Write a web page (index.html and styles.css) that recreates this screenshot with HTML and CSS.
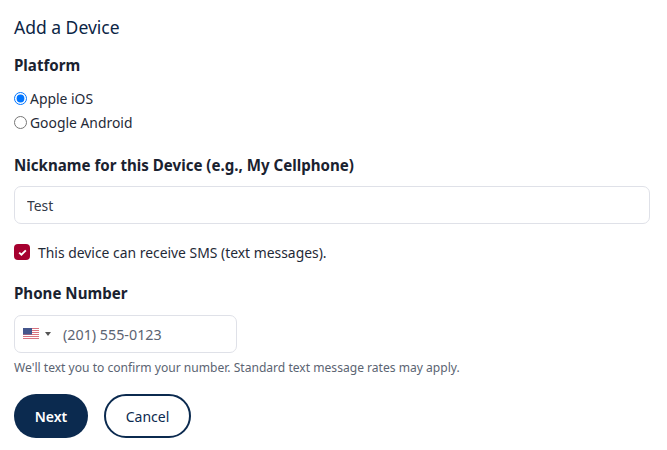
FILE: index.html
```html
<!DOCTYPE html>
<html lang="en">
<head>
    <meta charset="UTF-8">
    <title>Add a Device</title>
    <link rel="stylesheet" href="styles.css">
</head>
<body>
    <form class="device-form">
        <h1 class="title">Add a Device</h1>

        <div class="group-label platform-label">Platform</div>
        <label class="radio-row"><input type="radio" name="platform" checked> Apple iOS</label>
        <label class="radio-row"><input type="radio" name="platform"> Google Android</label>

        <label class="group-label nickname-label" for="nickname">Nickname for this Device (e.g., My Cellphone)</label>
        <input class="text-input" type="text" id="nickname" value="Test">

        <div class="check-row">
            <span class="check-box">
                <svg width="9" height="7" viewBox="0 0 10 8"><path d="M1.2 4.1 3.8 6.5 8.8 1.5" fill="none" stroke="#fff" stroke-width="2.2"/></svg>
            </span>
            <span>This device can receive SMS (text messages).</span>
        </div>

        <label class="group-label phone-label" for="phone">Phone Number</label>
        <div class="phone-input">
            <svg class="flag" width="16" height="12" viewBox="0 0 16 12">
                <rect width="16" height="12" fill="#fff"/>
                <path d="M0 .5h16M0 2.5h16M0 4.5h16M0 6.5h16M0 8.5h16M0 10.5h16" stroke="#d9737f" stroke-width="1"/>
                <rect width="9" height="6.5" fill="#45568c"/>
            </svg>
            <span class="caret"></span>
            <span class="phone-number" id="phone">(201) 555-0123</span>
        </div>
        <p class="hint">We'll text you to confirm your number. Standard text message rates may apply.</p>

        <div class="buttons">
            <button type="button" class="btn btn-primary">Next</button>
            <button type="button" class="btn btn-outline">Cancel</button>
        </div>
    </form>
</body>
</html>
```
FILE: styles.css
```css
body {
    margin: 0;
    padding: 0;
    background-color: #fff;
    font-family: "Noto Sans", "Open Sans", sans-serif;
    font-size: 13.9px;
    color: #1f2a37;
}
.device-form {
    padding: 16px 17px 0 14px;
}
.title {
    margin: 0;
    font-size: 17.5px;
    font-weight: 400;
    line-height: 22px;
    color: #0b2545;
}
.group-label {
    display: block;
    font-size: 15.1px;
    font-weight: 700;
    line-height: 20px;
    color: #1a2230;
}
.platform-label {
    margin-top: 17px;
    margin-bottom: 11px;
}
.radio-row {
    display: flex;
    align-items: center;
    height: 24px;
    color: #1f2a37;
}
.radio-row input {
    width: 13px;
    height: 13px;
    margin: 0 3px 0 0;
    accent-color: #0075ff;
}
.nickname-label {
    margin-top: 21px;
    margin-bottom: 11px;
}
.text-input {
    display: block;
    box-sizing: border-box;
    width: 100%;
    height: 38px;
    padding: 0 12px;
    border: 1px solid #dfe1e8;
    border-radius: 7px;
    font-family: inherit;
    font-size: 13.9px;
    color: #333b47;
}
.check-row {
    display: flex;
    align-items: center;
    margin-top: 18px;
    height: 20px;
}
.check-box {
    display: flex;
    align-items: center;
    justify-content: center;
    width: 16px;
    height: 16px;
    margin-right: 8px;
    border-radius: 4px;
    background-color: #a6002f;
}
.phone-label {
    margin-top: 21px;
    margin-bottom: 12px;
}
.phone-input {
    display: flex;
    align-items: center;
    box-sizing: border-box;
    width: 223px;
    height: 38px;
    padding-left: 8px;
    border: 1px solid #dfe1e8;
    border-radius: 7px;
}
.caret {
    width: 0;
    height: 0;
    margin-left: 6px;
    border-top: 4px solid #555;
    border-left: 3px solid transparent;
    border-right: 3px solid transparent;
}
.phone-number {
    margin-left: 12px;
    font-size: 14.3px;
    color: #5b6472;
}
.hint {
    margin: 7px 0 0;
    font-size: 12.08px;
    line-height: 16px;
    color: #5b6472;
}
.buttons {
    display: flex;
    gap: 16px;
    margin-top: 18px;
}
.btn {
    box-sizing: border-box;
    height: 44px;
    border-radius: 22px;
    font-family: inherit;
    font-size: 14px;
    cursor: pointer;
}
.btn-primary {
    width: 74px;
    border: none;
    background-color: #0b2a4f;
    color: #fff;
    font-weight: 600;
}
.btn-outline {
    width: 87px;
    border: 2px solid #0b2a4f;
    background-color: #fff;
    color: #0b2a4f;
}
```
